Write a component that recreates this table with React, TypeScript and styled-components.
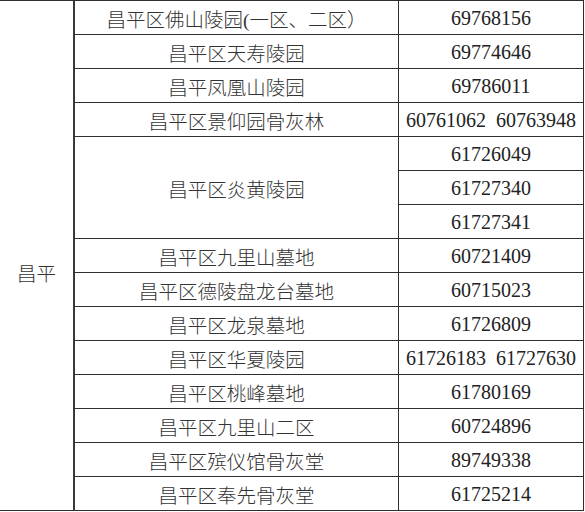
import styled, { createGlobalStyle } from "styled-components";

interface Entry {
  name: string;
  phones: string[];
}

const entries: Entry[] = [
  { name: "昌平区佛山陵园(一区、二区）", phones: ["69768156"] },
  { name: "昌平区天寿陵园", phones: ["69774646"] },
  { name: "昌平凤凰山陵园", phones: ["69786011"] },
  { name: "昌平区景仰园骨灰林", phones: ["60761062  60763948"] },
  { name: "昌平区炎黄陵园", phones: ["61726049", "61727340", "61727341"] },
  { name: "昌平区九里山墓地", phones: ["60721409"] },
  { name: "昌平区德陵盘龙台墓地", phones: ["60715023"] },
  { name: "昌平区龙泉墓地", phones: ["61726809"] },
  { name: "昌平区华夏陵园", phones: ["61726183  61727630"] },
  { name: "昌平区桃峰墓地", phones: ["61780169"] },
  { name: "昌平区九里山二区", phones: ["60724896"] },
  { name: "昌平区殡仪馆骨灰堂", phones: ["89749338"] },
  { name: "昌平区奉先骨灰堂", phones: ["61725214"] },
];

const totalRows = entries.reduce((n, e) => n + e.phones.length, 0);

const App = () => {
  return (
    <>
      <GlobalStyle />
      <Table>
        <RegionCell $span={totalRows}>昌平</RegionCell>
        {entries.map((entry) => (
          <Group key={entry.name}>
            <NameCell $span={entry.phones.length}>{entry.name}</NameCell>
            {entry.phones.map((phone) => (
              <PhoneCell key={phone}>{phone}</PhoneCell>
            ))}
          </Group>
        ))}
      </Table>
    </>
  );
};

export default App;

const GlobalStyle = createGlobalStyle`
  body {
    margin: 0;
    background: #ffffff;
  }
`;

const Table = styled.div`
  display: grid;
  grid-template-columns: 75px 324px 184px;
  grid-auto-rows: 34px;
  width: 584px;
  box-sizing: border-box;
  border-top: 1px solid #2e2e2e;
  border-right: 1px solid #2e2e2e;
  font-family: "Liberation Serif", "Noto Sans CJK SC", serif;
  font-weight: 300;
  color: #333333;
`;

const Group = styled.div`
  display: contents;
`;

const Cell = styled.div`
  display: flex;
  align-items: center;
  justify-content: center;
  box-sizing: border-box;
  border-bottom: 1px solid #2e2e2e;
  white-space: pre;
`;

const RegionCell = styled(Cell)<{ $span: number }>`
  grid-column: 1;
  grid-row: 1 / span ${({ $span }) => $span};
  padding-top: 34px;
  border-right: 2px solid #3a3a3a;
  font-size: 19.5px;
`;

const NameCell = styled(Cell)<{ $span: number }>`
  grid-column: 2;
  grid-row: span ${({ $span }) => $span};
  border-right: 1px solid #2e2e2e;
  font-size: 19.5px;
  padding-top: 1px;
`;

const PhoneCell = styled(Cell)`
  grid-column: 3;
  font-size: 20px;
  color: #222222;
  padding-top: 1px;
`;
